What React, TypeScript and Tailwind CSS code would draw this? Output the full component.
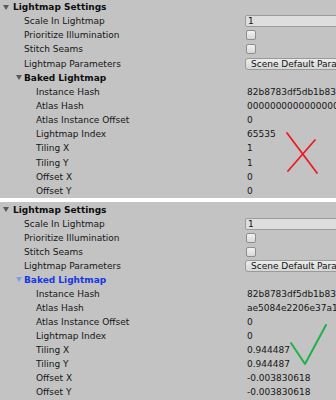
import React from "react";

type Row = {
  label: string;
  level: 0 | 1 | 2;
  kind: "header" | "foldout" | "field" | "check" | "button" | "text";
  value?: string;
};

const baseRows = (hash: string, index: string, tx: string, ty: string, ox: string, oy: string, atlasOffset: string): Row[] => [
  { label: "Lightmap Settings", level: 0, kind: "header" },
  { label: "Scale In Lightmap", level: 1, kind: "field", value: "1" },
  { label: "Prioritize Illumination", level: 1, kind: "check" },
  { label: "Stitch Seams", level: 1, kind: "check" },
  { label: "Lightmap Parameters", level: 1, kind: "button", value: "Scene Default Parameters" },
  { label: "Baked Lightmap", level: 1, kind: "foldout" },
  { label: "Instance Hash", level: 2, kind: "text", value: "82b8783df5db1b83ea1c07e2" },
  { label: "Atlas Hash", level: 2, kind: "text", value: hash },
  { label: "Atlas Instance Offset", level: 2, kind: "text", value: atlasOffset },
  { label: "Lightmap Index", level: 2, kind: "text", value: index },
  { label: "Tiling X", level: 2, kind: "text", value: tx },
  { label: "Tiling Y", level: 2, kind: "text", value: ty },
  { label: "Offset X", level: 2, kind: "text", value: ox },
  { label: "Offset Y", level: 2, kind: "text", value: oy },
];

const before = baseRows("00000000000000000000000", "65535", "1", "1", "0", "0", "0");
const after = baseRows("ae5084e2206e37a1f8c2d0b9", "0", "0.944487", "0.944487", "-0.003830618", "-0.003830618", "0");

const Triangle = ({ blue }: { blue?: boolean }) => (
  <svg width="6" height="5" viewBox="0 0 6 5" className="shrink-0">
    <path d="M0 0 L6 0 L3 5 Z" fill={blue ? "#7f9be6" : "#5a5a5a"} />
  </svg>
);

const InspectorRow = ({ row, focused, rowH }: { row: Row; focused?: boolean; rowH: string }) => {
  const pad = row.level === 0 ? "pl-[3px]" : row.level === 1 ? "pl-[24px]" : "pl-[36px]";

  if (row.kind === "header" || row.kind === "foldout") {
    const blue = focused && row.kind === "foldout";
    return (
      <div className={`flex ${rowH} items-center ${row.kind === "foldout" ? "pl-[16px]" : pad}`}>
        <Triangle blue={blue} />
        <span
          className={`${row.kind === "header" ? "ml-[4px]" : "ml-[2px]"} text-[9px] font-bold leading-[14px] ${
            blue ? "text-[#1637e6]" : "text-[#0e0e0e]"
          }`}
        >
          {row.label}
        </span>
      </div>
    );
  }

  return (
    <div className={`flex ${rowH} items-center`}>
      <div className={`w-[245px] shrink-0 ${pad} text-[9px] leading-[14px] text-[#161616]`}>{row.label}</div>
      <div className="flex h-full flex-1 items-center whitespace-nowrap">
        {row.kind === "field" && (
          <div className="h-[12px] w-[120px] rounded-[2px] border border-[#9c9c9c] bg-[#dedede] pl-[2px] text-[9px] leading-[10px] text-[#111111]">
            {row.value}
          </div>
        )}
        {row.kind === "check" && (
          <div className="ml-[1px] h-[10px] w-[10px] rounded-[2px] border border-[#8e8e8e] bg-gradient-to-b from-[#f2f2f2] to-[#d8d8d8]" />
        )}
        {row.kind === "button" && (
          <div className="h-[12px] w-[120px] rounded-[3px] border border-[#9a9a9a] bg-gradient-to-b from-[#ececec] to-[#d6d6d6] pl-[5px] text-[9px] leading-[10px] text-[#111111]">
            {row.value}
          </div>
        )}
        {row.kind === "text" && <span className="pl-[2px] text-[9px] leading-[14px] text-[#161616]">{row.value}</span>}
      </div>
    </div>
  );
};

export default function App() {
  return (
    <div className="h-[400px] w-[336px] overflow-hidden bg-[#c3c3c3] font-['DejaVu_Sans',sans-serif]">
      {/* before */}
      <div className="relative">
        {before.map((r) => (
          <InspectorRow key={r.label} row={r} rowH="h-[14.15px]" />
        ))}
        <svg className="absolute left-[285px] top-[131px]" width="36" height="44" viewBox="0 0 36 44">
          <path d="M2 2 L32 42" stroke="#ec1c24" strokeWidth="1.8" strokeLinecap="round" fill="none" />
          <path d="M30 9 L3 40" stroke="#ec1c24" strokeWidth="1.8" strokeLinecap="round" fill="none" />
        </svg>
      </div>

      <div className="h-[4px] bg-white" />

      {/* after */}
      <div className="relative pt-[1px]">
        {after.map((r) => (
          <InspectorRow key={r.label} row={r} focused rowH="h-[14px]" />
        ))}
        <svg className="absolute left-[288px] top-[121px]" width="42" height="44" viewBox="0 0 42 44">
          <path d="M3 20 L17 41 L38 2" stroke="#1fb24a" strokeWidth="2" strokeLinecap="round" strokeLinejoin="round" fill="none" />
        </svg>
      </div>
    </div>
  );
}
